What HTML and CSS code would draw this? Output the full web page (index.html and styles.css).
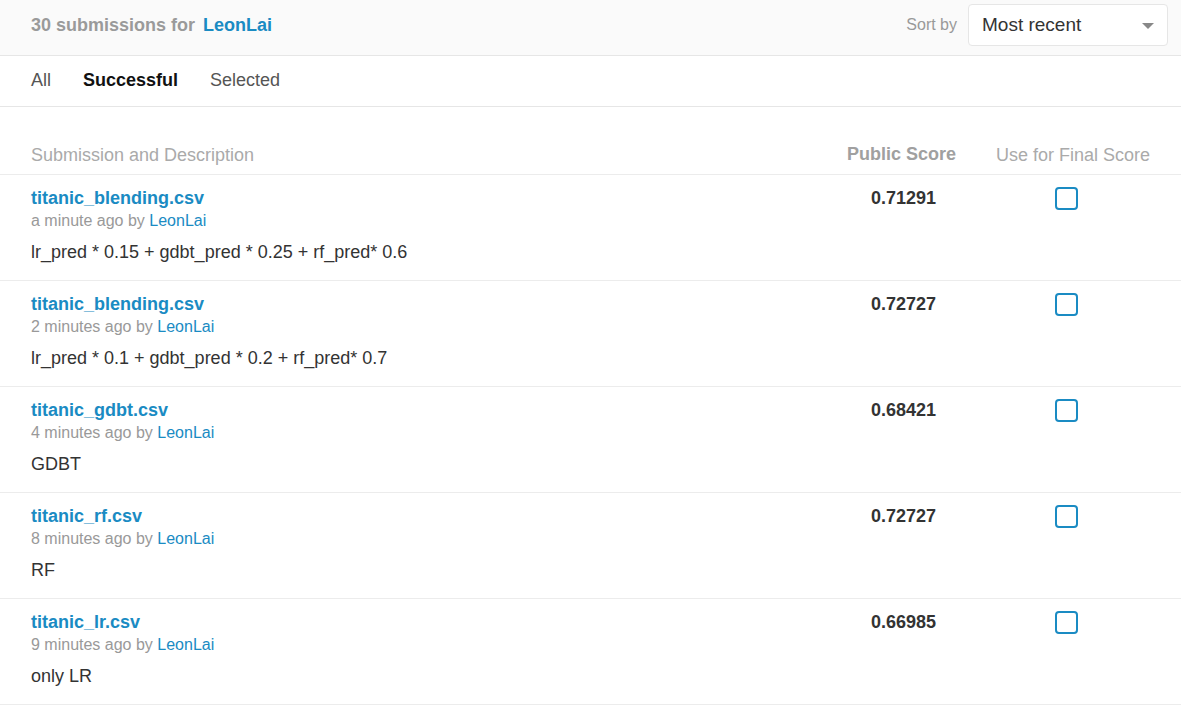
FILE: index.html
```html
<!DOCTYPE html>
<html>
<head>
<meta charset="utf-8">
<link rel="stylesheet" href="styles.css">
</head>
<body>
<div class="page">
  <header class="topbar">
    <div class="title"><span class="count">30 submissions for</span><a class="user">LeonLai</a></div>
    <div class="sort">
      <span class="sort-label">Sort by</span>
      <div class="select"><span>Most recent</span><span class="caret"></span></div>
    </div>
  </header>
  <nav class="tabs">
    <span class="tab">All</span>
    <span class="tab active">Successful</span>
    <span class="tab">Selected</span>
  </nav>
  <div class="table">
    <div class="row head">
      <div class="c-desc">Submission and Description</div>
      <div class="c-score">Public Score</div>
      <div class="c-final">Use for Final Score</div>
    </div>
    <div class="row">
      <div class="c-desc">
        <div class="file">titanic_blending.csv</div>
        <div class="meta">a minute ago by <a>LeonLai</a></div>
        <div class="desc">lr_pred * 0.15 + gdbt_pred * 0.25 + rf_pred* 0.6</div>
      </div>
      <div class="c-score">0.71291</div>
      <div class="c-final"><span class="check"></span></div>
    </div>
    <div class="row">
      <div class="c-desc">
        <div class="file">titanic_blending.csv</div>
        <div class="meta">2 minutes ago by <a>LeonLai</a></div>
        <div class="desc">lr_pred * 0.1 + gdbt_pred * 0.2 + rf_pred* 0.7</div>
      </div>
      <div class="c-score">0.72727</div>
      <div class="c-final"><span class="check"></span></div>
    </div>
    <div class="row">
      <div class="c-desc">
        <div class="file">titanic_gdbt.csv</div>
        <div class="meta">4 minutes ago by <a>LeonLai</a></div>
        <div class="desc">GDBT</div>
      </div>
      <div class="c-score">0.68421</div>
      <div class="c-final"><span class="check"></span></div>
    </div>
    <div class="row">
      <div class="c-desc">
        <div class="file">titanic_rf.csv</div>
        <div class="meta">8 minutes ago by <a>LeonLai</a></div>
        <div class="desc">RF</div>
      </div>
      <div class="c-score">0.72727</div>
      <div class="c-final"><span class="check"></span></div>
    </div>
    <div class="row">
      <div class="c-desc">
        <div class="file">titanic_lr.csv</div>
        <div class="meta">9 minutes ago by <a>LeonLai</a></div>
        <div class="desc">only LR</div>
      </div>
      <div class="c-score">0.66985</div>
      <div class="c-final"><span class="check"></span></div>
    </div>
  </div>
</div>
</body>
</html>
```
FILE: styles.css
```css
* { box-sizing: border-box; }
html, body { margin: 0; padding: 0; background: #fff; }
body { font-family: "Liberation Sans", Arial, sans-serif; color: #333; }
.page { width: 1181px; overflow: hidden; }

.topbar {
  height: 56px;
  background: #fafafa;
  border-bottom: 1px solid #e6e6e6;
  display: flex;
  align-items: flex-start;
  justify-content: space-between;
  padding: 4px 13px 0 31px;
}
.title { font-size: 18px; font-weight: 700; line-height: 42px; }
.count { color: #9a9a9a; }
.user { color: #1a8bc3; margin-left: 8px; }
.sort { display: flex; align-items: center; height: 42px; }
.sort-label { color: #999; font-size: 16px; margin-right: 11px; }
.select {
  width: 200px; height: 42px;
  background: #fff;
  border: 1px solid #e6e6e6;
  border-radius: 4px;
  display: flex; align-items: center; justify-content: space-between;
  padding: 0 13px 0 13px;
  font-size: 19px; color: #333;
}
.caret {
  width: 0; height: 0;
  border-left: 6px solid transparent;
  border-right: 6px solid transparent;
  border-top: 6px solid #888;
  margin-top: 2px;
}

.tabs {
  height: 51px;
  border-bottom: 1px solid #e6e6e6;
  display: flex; align-items: center;
  padding: 0 0 2px 31px;
  gap: 32px;
  font-size: 18px;
}
.tab { color: #555; }
.tab.active { color: #111; font-weight: 700; }

.table { margin-top: 36px; }
.row {
  display: grid;
  grid-template-columns: 1fr 132px 194px;
  padding: 12px 31px 0 31px;
  height: 106px;
  border-bottom: 1px solid #ececec;
}
.row.head {
  height: 32px;
  padding-top: 0;
  font-size: 18px;
  color: #aaa;
  line-height: 24px;
}
.row.head .c-score { font-weight: 700; text-align: right; padding-right: 0; color: #a0a0a0; }
.row.head .c-final { text-align: right; }

.file { color: #1a8bc3; font-weight: 700; font-size: 18px; line-height: 23px; }
.meta { color: #999; font-size: 16px; line-height: 22px; }
.meta a { color: #1a8bc3; }
.desc { font-size: 18px; line-height: 24px; margin-top: 8px; color: #333; }

.c-score { text-align: right; padding-right: 20px; font-size: 18px; font-weight: 700; line-height: 22px; color: #333; }
.c-final { position: relative; }
.check {
  display: block;
  width: 23px; height: 23px;
  border: 2px solid #1a8bc3;
  border-radius: 4px;
  margin-left: 99px;
}
```
